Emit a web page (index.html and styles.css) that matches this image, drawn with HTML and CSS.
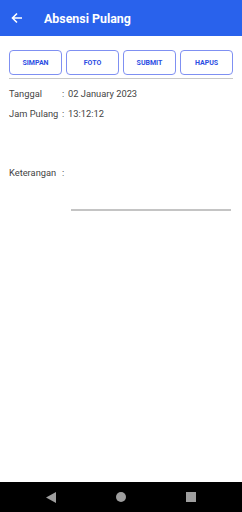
FILE: index.html
```html
<!DOCTYPE html>
<html>
<head>
<meta charset="utf-8">
<link rel="stylesheet" href="styles.css">
</head>
<body>
<div class="screen">
  <header class="appbar">
    <svg class="back" width="12" height="12" viewBox="0 0 12 12"><path d="M11 6H2M6 1.5L1.5 6 6 10.5" fill="none" stroke="#fff" stroke-width="1.6"/></svg>
    <span class="title">Absensi Pulang</span>
  </header>
  <main class="content">
    <div class="buttons">
      <button class="btn">SIMPAN</button>
      <button class="btn">FOTO</button>
      <button class="btn">SUBMIT</button>
      <button class="btn">HAPUS</button>
    </div>
    <div class="divider"></div>
    <div class="row first"><span class="label">Tanggal</span><span class="colon">:</span><span class="value">02 January 2023</span></div>
    <div class="row second"><span class="label">Jam Pulang</span><span class="colon">:</span><span class="value">13:12:12</span></div>
    <div class="row ket"><span class="label">Keterangan</span><span class="colon">:</span></div>
    <div class="input"></div>
  </main>
  <nav class="navbar">
    <svg width="10" height="11" viewBox="0 0 10 11"><path d="M10 0V11L0 5.5Z" fill="#9e9e9e"/></svg>
    <svg width="10" height="10" viewBox="0 0 10 10"><circle cx="5" cy="5" r="5" fill="#9e9e9e"/></svg>
    <svg width="10" height="10" viewBox="0 0 10 10"><rect width="10" height="10" fill="#9e9e9e"/></svg>
  </nav>
</div>
</body>
</html>
```
FILE: styles.css
```css
* { box-sizing: border-box; }
html, body { margin: 0; padding: 0; }
body { font-family: Roboto, "Noto Sans", sans-serif; background: #fff; }
.screen { width: 242px; height: 512px; display: flex; flex-direction: column; }
.appbar { height: 36px; background: #2962ec; display: flex; align-items: center; padding-left: 11px; flex-shrink: 0; }
.back { display: block; }
.title { color: #fff; font-size: 12.4px; font-weight: 700; margin-left: 21px; }
.content { flex: 1; padding: 14px 9px 0 9px; }
.buttons { display: flex; gap: 4px; }
.btn { flex: 1; height: 25px; border: 1px solid #7f90f2; border-radius: 4px; background: #fff; color: #2b4de3; font-family: Roboto, sans-serif; font-size: 7px; font-weight: 700; padding: 0; }
.divider { height: 1px; background: #c8c8c8; margin-top: 3px; }
.row { display: flex; font-size: 9.3px; color: #444; height: 12px; line-height: 12px; white-space: nowrap; }
.row.first { margin-top: 9px; }
.row.second { margin-top: 8px; }
.row.ket { margin-top: 47px; }
.label { width: 53px; flex-shrink: 0; }
.colon { width: 6px; flex-shrink: 0; }
.input { margin: 30px 2px 0 62px; height: 2px; background: #c4c4c4; }
.navbar { height: 30px; background: #000; display: flex; align-items: center; justify-content: center; gap: 60px; flex-shrink: 0; }
.navbar svg { display: block; }
```
